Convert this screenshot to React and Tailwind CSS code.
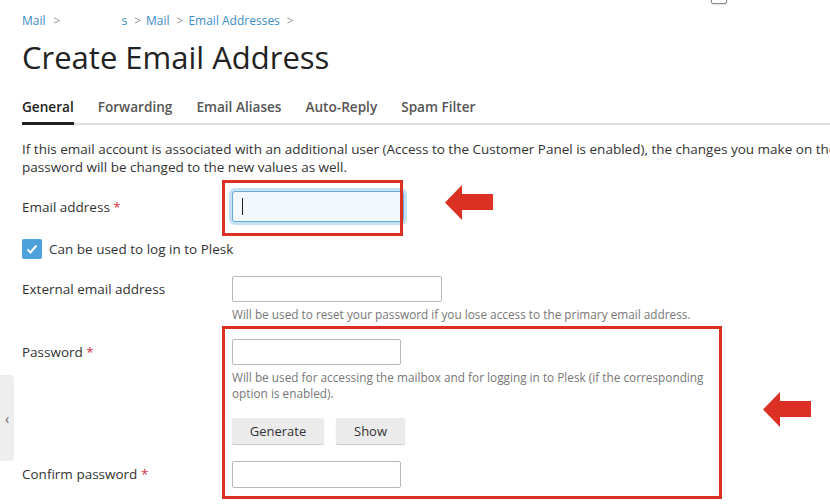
import React from 'react';

const Req = () => <span className="text-[#d0343f]"> *</span>;

const Arrow = ({ className }) => (
  <svg className={className} width="48" height="35" viewBox="0 0 48 35">
    <path d="M0 17.5 L17 0 L17 9 L48 9 L48 25 L17 25 L17 35 Z" fill="#dc3024" />
  </svg>
);

const Field = ({ label, required, children, labelTop = 'pt-[5px]' }) => (
  <div className="flex">
    <div className={`w-[210px] shrink-0 text-[13.5px] text-[#333] ${labelTop}`}>
      {label}
      {required && <Req />}
    </div>
    <div className="flex-1">{children}</div>
  </div>
);

const Input = ({ className = '' }) => (
  <div className={`h-[26px] border border-[#b8b8b8] rounded-[2px] bg-white ${className}`} />
);

export default function App() {
  const tabs = ['General', 'Forwarding', 'Email Aliases', 'Auto-Reply', 'Spam Filter'];

  return (
    <div className="relative w-[830px] h-[504px] overflow-hidden bg-white font-['Open_Sans',sans-serif] text-[#333]">
      {/* top stray checkbox */}
      <div className="absolute left-[711px] top-[-12px] w-[16px] h-[16px] border border-[#888] rounded-[2px] bg-white shadow-sm" />

      <div className="pl-[22px] pt-[12px]">
        {/* breadcrumbs */}
        <div className="flex items-center text-[12px] leading-[18px]">
          <span className="text-[#3c8dc5]">Mail</span>
          <span className="text-[#999] ml-[8px]">&gt;</span>
          <span className="text-[#3c8dc5] ml-[61px]">s</span>
          <span className="text-[#999] ml-[7px]">&gt;</span>
          <span className="text-[#3c8dc5] ml-[5px]">Mail</span>
          <span className="text-[#999] ml-[7px]">&gt;</span>
          <span className="text-[#3c8dc5] ml-[5px]">Email Addresses</span>
          <span className="text-[#999] ml-[7px]">&gt;</span>
        </div>

        <h1 className="mt-[7px] text-[31px] leading-[40px] font-normal text-[#222]">Create Email Address</h1>

        {/* tabs */}
        <div className="mt-[20px] flex border-b-2 border-[#e0e0e0]">
          {tabs.map((t, i) => (
            <div
              key={t}
              className={`pb-[5px] mr-[24px] text-[13.6px] leading-[20px] font-semibold ${
                i === 0 ? 'text-[#222] border-b-[3px] border-[#222] -mb-[2px]' : 'text-[#555]'
              }`}
            >
              {t}
            </div>
          ))}
        </div>

        <p className="mt-[15px] text-[13.5px] leading-[18px] whitespace-nowrap">
          If this email account is associated with an additional user (Access to the Customer Panel is enabled), the changes you make on the
          <br />
          password will be changed to the new values as well.
        </p>

        <div className="mt-[15px] flex flex-col">
          <Field label="Email address" required labelTop="pt-[6px]">
            <div className="w-[172px] h-[31px] rounded-[3px] border border-[#6aaad8] bg-[#f2f8fc] shadow-[0_0_0_3px_#c4e0f3] flex items-center pl-[9px]">
              <div className="w-px h-[17px] bg-[#222]" />
            </div>
          </Field>

          <div className="mt-[17px] flex items-center">
            <div className="w-[20px] h-[20px] rounded-[2px] bg-[#4da1da] flex items-center justify-center">
              <svg width="14" height="14" viewBox="0 0 14 14">
                <path d="M2.5 7.5 L5.5 10.5 L11.5 3.5" fill="none" stroke="white" strokeWidth="2" />
              </svg>
            </div>
            <span className="ml-[7px] text-[13.5px]">Can be used to log in to Plesk</span>
          </div>

          <div className="mt-[17px]">
            <Field label="External email address" labelTop="pt-[3px]">
              <Input className="w-[210px]" />
              <div className="mt-[4px] text-[11.8px] leading-[16px] text-[#777]">
                Will be used to reset your password if you lose access to the primary email address.
              </div>
            </Field>
          </div>

          <div className="mt-[17px]">
            <Field label="Password" required labelTop="pt-[3px]">
              <Input className="w-[169px]" />
              <div className="mt-[4px] w-[480px] text-[11.8px] leading-[16px] text-[#777]">
                Will be used for accessing the mailbox and for logging in to Plesk (if the corresponding option is enabled).
              </div>
              <div className="mt-[17px] flex gap-[12px]">
                <button className="w-[92px] h-[26px] bg-[#ebebeb] rounded-[2px] shadow-[0_1px_1px_#c8c8c8] text-[13px] text-[#333]">
                  Generate
                </button>
                <button className="w-[69px] h-[26px] bg-[#ebebeb] rounded-[2px] shadow-[0_1px_1px_#c8c8c8] text-[13px] text-[#333]">
                  Show
                </button>
              </div>
            </Field>
          </div>

          <div className="mt-[17px]">
            <Field label="Confirm password" required labelTop="pt-[3px]">
              <Input className="w-[169px] h-[27px]" />
            </Field>
          </div>
        </div>
      </div>

      {/* left collapse handle */}
      <div className="absolute left-0 top-[375px] w-[14px] h-[86px] bg-[#eeeeee] rounded-r-[4px] flex items-center justify-center text-[14px] text-[#666]">
        &lsaquo;
      </div>

      {/* annotations */}
      <div className="absolute left-[222px] top-[180px] w-[181px] h-[56px] border-[3px] border-[#dc3024]" />
      <div className="absolute left-[222px] top-[326px] w-[500px] h-[173px] border-[3px] border-[#dc3024]" />
      <Arrow className="absolute left-[445px] top-[185px]" />
      <Arrow className="absolute left-[763px] top-[392px]" />
    </div>
  );
}
